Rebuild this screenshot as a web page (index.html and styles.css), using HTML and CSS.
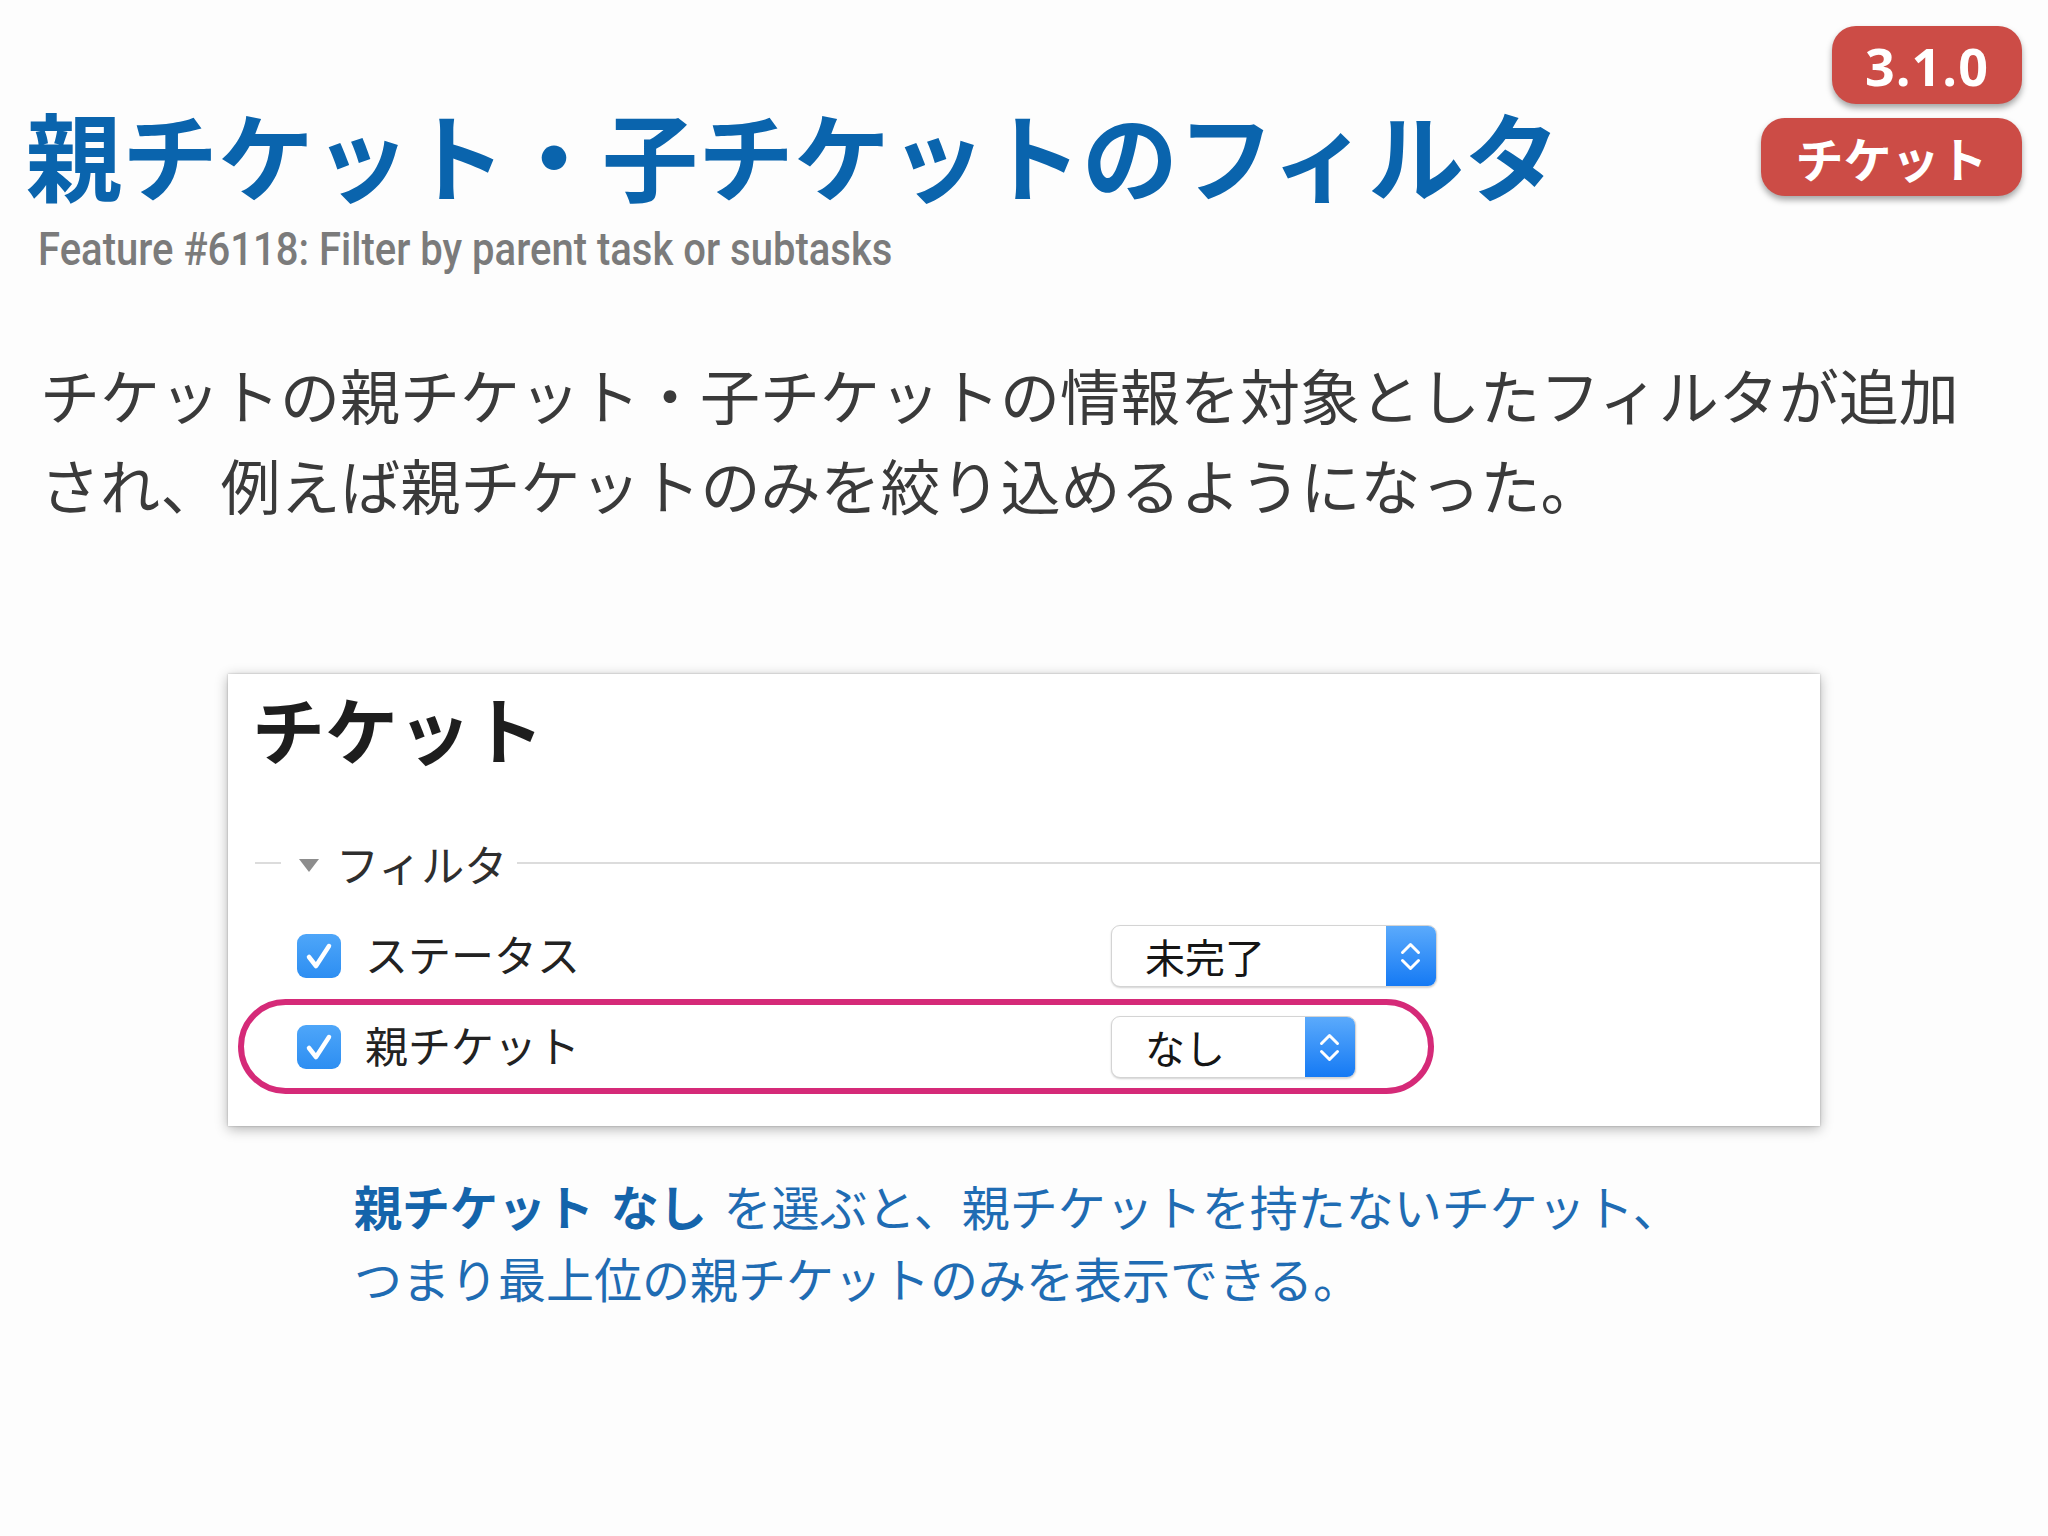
FILE: index.html
```html
<!DOCTYPE html>
<html lang="ja">
<head>
<meta charset="utf-8">
<title>親チケット・子チケットのフィルタ</title>
<link rel="stylesheet" href="styles.css">
</head>
<body>
<div class="slide">
  <header class="top">
    <div class="titles">
      <h1 class="title">親チケット・子チケットのフィルタ</h1>
      <p class="sub">Feature #6118: Filter by parent task or subtasks</p>
    </div>
    <div class="badges">
      <span class="badge badge-ver">3.1.0</span>
      <span class="badge badge-cat">チケット</span>
    </div>
  </header>

  <p class="lead">チケットの親チケット・子チケットの情報を対象としたフィルタが追加<br>され、例えば親チケットのみを絞り込めるようになった。</p>

  <section class="panel">
    <h2 class="panel-title">チケット</h2>
    <div class="legend">
      <span class="legend-dash"></span>
      <span class="legend-tri"></span>
      <span class="legend-text">フィルタ</span>
      <span class="legend-line"></span>
    </div>
    <div class="row row-plain">
      <div class="field">
        <span class="check"><svg viewBox="0 0 44 44" width="44" height="44"><path d="M12 23 L19 32 L32 12" fill="none" stroke="#fff" stroke-width="4.5" stroke-linecap="round" stroke-linejoin="round"/></svg></span>
        <span class="label">ステータス</span>
      </div>
      <div class="select select-wide">
        <span class="select-text">未完了</span>
        <span class="select-btn"><svg viewBox="0 0 50 62" width="50" height="62"><path d="M16.5 27.5 L24.5 19.5 L32.5 27.5 M16.5 35.5 L24.5 43.5 L32.5 35.5" fill="none" stroke="#fff" stroke-width="3" stroke-linecap="round" stroke-linejoin="round"/></svg></span>
      </div>
    </div>
    <div class="row row-pill">
      <div class="field">
        <span class="check"><svg viewBox="0 0 44 44" width="44" height="44"><path d="M12 23 L19 32 L32 12" fill="none" stroke="#fff" stroke-width="4.5" stroke-linecap="round" stroke-linejoin="round"/></svg></span>
        <span class="label">親チケット</span>
      </div>
      <div class="select select-narrow">
        <span class="select-text">なし</span>
        <span class="select-btn"><svg viewBox="0 0 50 62" width="50" height="62"><path d="M16.5 27.5 L24.5 19.5 L32.5 27.5 M16.5 35.5 L24.5 43.5 L32.5 35.5" fill="none" stroke="#fff" stroke-width="3" stroke-linecap="round" stroke-linejoin="round"/></svg></span>
      </div>
    </div>
  </section>

  <p class="caption"><b>親チケット</b> <b>なし</b> を選ぶと、親チケットを持たないチケット、<br>つまり最上位の親チケットのみを表示できる。</p>
</div>
</body>
</html>
```

FILE: styles.css
```css
html, body {
  margin: 0;
  padding: 0;
  background: #fdfdfd;
}

body {
  font-family: "Noto Sans CJK JP", "Noto Sans", sans-serif;
  color: #333;
}

.slide {
  width: 2048px;
  height: 1536px;
  box-sizing: border-box;
  overflow: hidden;
}

.top {
  display: flex;
  justify-content: space-between;
  align-items: flex-start;
  padding: 26px 26px 0 26px;
}

.titles {
  padding-top: 69px;
}

.title {
  margin: 0;
  font-size: 96px;
  line-height: 115px;
  font-weight: 700;
  color: #0a64ad;
  white-space: nowrap;
}

.sub {
  margin: 12px 0 0 12px;
  font-family: "Roboto", "Liberation Sans", sans-serif;
  font-weight: 500;
  font-size: 46px;
  line-height: 55px;
  color: #7b7b7b;
  white-space: nowrap;
  transform: scaleX(0.87);
  transform-origin: left center;
}

.badges {
  display: flex;
  flex-direction: column;
  align-items: flex-end;
  gap: 14px;
}

.badge {
  display: flex;
  align-items: center;
  justify-content: center;
  height: 78px;
  box-sizing: border-box;
  border-radius: 24px;
  background: #cc4c46;
  color: #fff;
  font-weight: 700;
  box-shadow: 0 4px 6px rgba(0, 0, 0, 0.35);
}

.badge-ver {
  width: 190px;
  font-family: "Open Sans", "Liberation Sans", sans-serif;
  font-size: 52px;
  letter-spacing: 1px;
}

.badge-cat {
  width: 261px;
  font-size: 48px;
}

.lead {
  margin: 72px 0 0 40px;
  font-size: 60px;
  line-height: 90px;
  color: #3a3a3a;
  white-space: nowrap;
}

.panel {
  margin: 145px 0 0 228px;
  width: 1592px;
  box-sizing: border-box;
  padding: 11px 0 32px 0;
  background: #fff;
  box-shadow: 0 3px 12px rgba(0, 0, 0, 0.3), 0 0 2px rgba(0, 0, 0, 0.25);
}

.panel-title {
  margin: 0 0 0 24px;
  font-size: 73px;
  line-height: 84px;
  font-weight: 700;
  color: #1e1e1e;
}

.legend {
  display: flex;
  align-items: center;
  height: 60px;
  margin: 64px 0 32px 27px;
}

.legend-dash {
  width: 26px;
  height: 2px;
  background: #dcdcdc;
}

.legend-tri {
  width: 0;
  height: 0;
  margin: 4px 17px 0 18px;
  border-left: 10px solid transparent;
  border-right: 10px solid transparent;
  border-top: 13px solid #8d8d8d;
}

.legend-text {
  font-size: 43px;
  line-height: 60px;
  color: #2e2e2e;
}

.legend-line {
  flex: 1;
  height: 2px;
  margin-left: 10px;
  background: #dcdcdc;
}

.row {
  display: flex;
  align-items: center;
  box-sizing: border-box;
}

.row-plain {
  height: 62px;
  margin-left: 69px;
}

.row-pill {
  margin: 12px 0 0 10px;
  width: 1196px;
  height: 95px;
  padding-left: 53px;
  border: 6px solid #d52a78;
  border-radius: 48px;
}

.field {
  width: 814px;
  display: flex;
  align-items: center;
  gap: 24px;
}

.check {
  display: block;
  width: 44px;
  height: 44px;
  border-radius: 9px;
  background: linear-gradient(#4ea6f9, #2d8ef2);
}

.check svg {
  display: block;
}

.label {
  font-size: 43px;
  line-height: 50px;
  color: #222;
  margin-top: -6px;
}

.select {
  display: flex;
  align-items: center;
  justify-content: space-between;
  height: 62px;
  box-sizing: border-box;
  border: 1px solid #d4d4d4;
  border-radius: 9px;
  background: #fff;
  box-shadow: 0 1px 2px rgba(0, 0, 0, 0.18);
  overflow: hidden;
}

.select-wide {
  width: 326px;
}

.select-narrow {
  width: 245px;
}

.select-text {
  padding-left: 33px;
  font-size: 40px;
  line-height: 60px;
  color: #151515;
}

.select-btn {
  display: block;
  width: 50px;
  height: 62px;
  background: linear-gradient(#5cabfc, #1479f4);
}

.select-btn svg {
  display: block;
}

.caption {
  margin: 43px 0 0 354px;
  font-size: 48px;
  line-height: 72px;
  color: #1f6cb3;
  white-space: nowrap;
  word-spacing: 6px;
}

.caption b {
  font-weight: 700;
  color: #1464ab;
}
```
